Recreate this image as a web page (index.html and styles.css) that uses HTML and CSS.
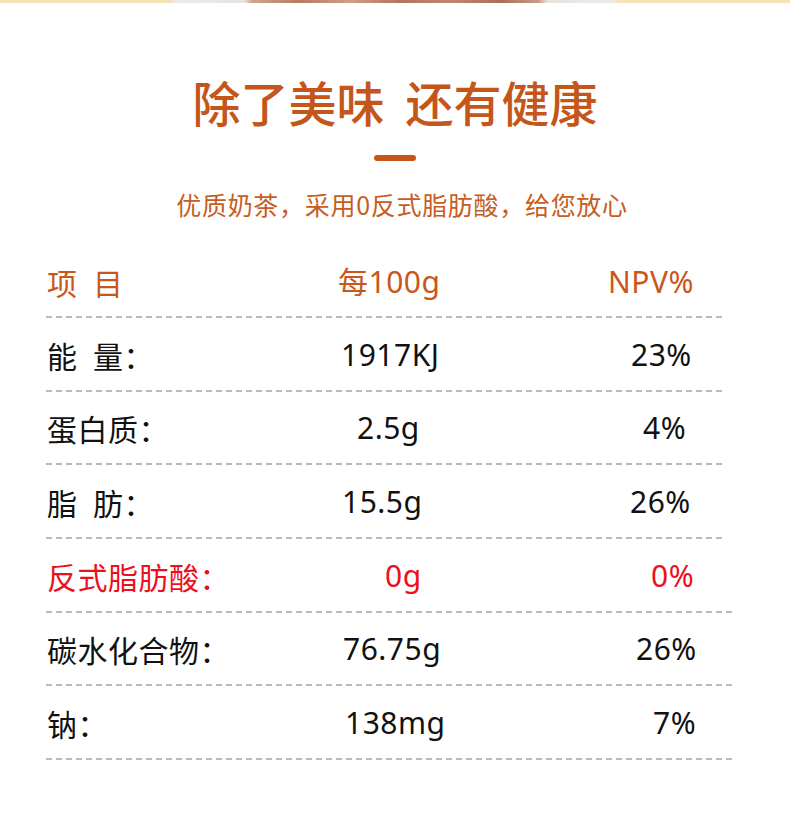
FILE: index.html
```html
<!DOCTYPE html>
<html lang="zh-CN">
<head>
<meta charset="utf-8">
<title>除了美味 还有健康</title>
<link rel="stylesheet" href="styles.css">
</head>
<body>
<div class="topstrip"></div>
<header class="hero">
  <h1 class="title">除了美味<span class="gap"></span>还有健康</h1>
  <div class="bar"></div>
  <p class="subtitle">优质奶茶，采用0反式脂肪酸，给您放心</p>
</header>
<section class="table">
  <div class="row head">
    <span class="c-label">项&ensp;目</span>
    <span class="c-val"><span class="cell s-m3">每100g</span></span>
    <span class="c-npv"><span class="cell s-7">NPV%</span></span>
  </div>
  <div class="rule"></div>
  <div class="row">
    <span class="c-label">能&ensp;量：</span>
    <span class="c-val"><span class="cell s-0">1917KJ</span></span>
    <span class="c-npv"><span class="cell s-30">23%</span></span>
  </div>
  <div class="rule"></div>
  <div class="row">
    <span class="c-label">蛋白质：</span>
    <span class="c-val"><span class="cell s-16">2.5g</span></span>
    <span class="c-npv"><span class="cell s-42">4%</span></span>
  </div>
  <div class="rule"></div>
  <div class="row">
    <span class="c-label">脂&ensp;肪：</span>
    <span class="c-val"><span class="cell s-1">15.5g</span></span>
    <span class="c-npv"><span class="cell s-29">26%</span></span>
  </div>
  <div class="rule"></div>
  <div class="row red">
    <span class="c-label">反式脂肪酸：</span>
    <span class="c-val"><span class="cell s-44">0g</span></span>
    <span class="c-npv"><span class="cell s-50">0%</span></span>
  </div>
  <div class="rule rule-long"></div>
  <div class="row">
    <span class="c-label">碳水化合物：</span>
    <span class="c-val"><span class="cell s-2">76.75g</span></span>
    <span class="c-npv"><span class="cell s-35">26%</span></span>
  </div>
  <div class="rule rule-long"></div>
  <div class="row">
    <span class="c-label">钠：</span>
    <span class="c-val"><span class="cell s-4">138mg</span></span>
    <span class="c-npv"><span class="cell s-52">7%</span></span>
  </div>
  <div class="rule rule-long"></div>
</section>
</body>
</html>
```

FILE: styles.css
```css
html, body {
  margin: 0;
  padding: 0;
  background: #ffffff;
}

body {
  width: 790px;
  font-family: "Noto Sans", "Noto Sans CJK SC", sans-serif;
  color: #111111;
}

.topstrip {
  height: 3px;
  background: linear-gradient(to right,
    #f6e2b2 0px, #f6e2b2 168px,
    #eceae6 176px, #e8e5e1 244px,
    #cfa48e 252px, #b67b62 300px, #cf9f88 350px,
    #b07560 400px, #bd8873 450px, #a96f5a 500px, #c99985 538px,
    #e8e5e1 548px, #eceae6 612px,
    #f6e2b2 622px, #f6e2b2 790px);
}

.hero {
  display: flex;
  flex-direction: column;
  align-items: center;
}

.title {
  margin: 74px 0 0;
  font-family: "Noto Sans CJK SC", sans-serif;
  font-size: 48px;
  line-height: 48px;
  font-weight: 500;
  color: #c4561a;
}

.gap {
  display: inline-block;
  width: 21px;
}

.bar {
  margin-top: 30px;
  width: 42px;
  height: 6px;
  border-radius: 3px;
  background: #c4561a;
}

.subtitle {
  margin: 31px 0 0;
  font-family: "Noto Sans CJK SC", sans-serif;
  font-size: 25px;
  line-height: 25px;
  font-weight: 400;
  letter-spacing: 0.7px;
  color: #c65d22;
  padding-left: 14px;
}

.table {
  margin-top: 27px;
}

.row {
  display: grid;
  grid-template-columns: 294px 260px 1fr;
  align-items: center;
  height: 71.67px;
  box-sizing: border-box;
  padding-left: 47px;
  padding-top: 2px;
  font-size: 30px;
  line-height: 30px;
  letter-spacing: 0.5px;
  color: #111111;
}

.row.head {
  height: 72px;
  padding-top: 4px;
  color: #c8571b;
}

.row.red {
  color: #ec0f1c;
}

.c-label {
  font-family: "Noto Sans CJK SC", sans-serif;
  white-space: nowrap;
}

.cell {
  display: inline-block;
  white-space: nowrap;
}

.s-m3 { margin-left: -3px; }
.s-0 { margin-left: 0; }
.s-1 { margin-left: 1px; }
.s-2 { margin-left: 2px; }
.s-4 { margin-left: 4px; }
.s-7 { margin-left: 7px; }
.s-16 { margin-left: 16px; }
.s-29 { margin-left: 29px; }
.s-30 { margin-left: 30px; }
.s-35 { margin-left: 35px; }
.s-42 { margin-left: 42px; }
.s-44 { margin-left: 44px; }
.s-50 { margin-left: 50px; }
.s-52 { margin-left: 52px; }

.rule {
  height: 2px;
  margin-left: 46px;
  width: 677px;
  background-image: linear-gradient(to right, #b9b9b9 0, #b9b9b9 6px, transparent 6px, transparent 10px);
  background-size: 10px 2px;
  background-repeat: repeat-x;
}

.rule-long {
  width: 687px;
}
```
